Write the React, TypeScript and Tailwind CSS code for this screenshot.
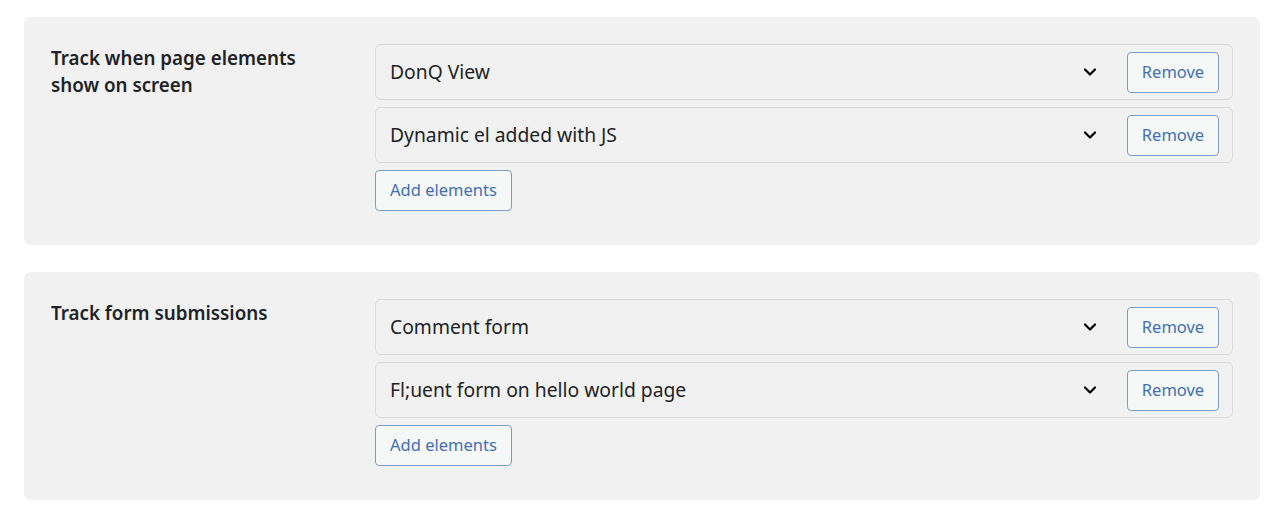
import { ChevronDown } from "lucide-react";

interface Section {
  title: string;
  items: string[];
}

const sections: Section[] = [
  { title: "Track when page elements show on screen", items: ["DonQ View", "Dynamic el added with JS"] },
  { title: "Track form submissions", items: ["Comment form", "Fl;uent form on hello world page"] },
];

function ElementRow({ label }: { label: string }) {
  return (
    <div className="flex h-[56px] items-center rounded-[6px] border border-[#dcdcde] pl-[14px] pr-[13px]">
      <span className="flex-1 pt-[1px] text-[19.3px] text-[#1d2327]">{label}</span>
      <ChevronDown className="mr-[27px] h-[20px] w-[20px] text-black" strokeWidth={2.6} />
      <button className="h-[41px] w-[92px] rounded-[4px] border border-[#7b9dcc] bg-[#f6f7f7] text-[16.5px] text-[#3f70b4]">
        Remove
      </button>
    </div>
  );
}

export default function App() {
  return (
    <div className="flex flex-col gap-[27px] bg-white pl-[24px] pr-[20px] pt-[17px] pb-[18px]" style={{ fontFamily: '"Noto Sans", "Open Sans", sans-serif' }}>
      {sections.map((s) => (
        <div key={s.title} className="flex rounded-[7px] bg-[#f1f1f1] pt-[27px] pr-[27px] pb-[34px] pl-[27px]">
          <div className="w-[324px] pr-[30px] pt-[1px] text-[18.8px] font-semibold leading-[27px] text-[#1d2327]">{s.title}</div>
          <div className="flex flex-1 flex-col gap-[7px]">
            {s.items.map((i) => (
              <ElementRow key={i} label={i} />
            ))}
            <div>
              <button className="h-[41px] rounded-[4px] border border-[#7b9dcc] bg-[#f6f7f7] px-[14px] text-[16.5px] text-[#3f70b4]">
                Add elements
              </button>
            </div>
          </div>
        </div>
      ))}
    </div>
  );
}
